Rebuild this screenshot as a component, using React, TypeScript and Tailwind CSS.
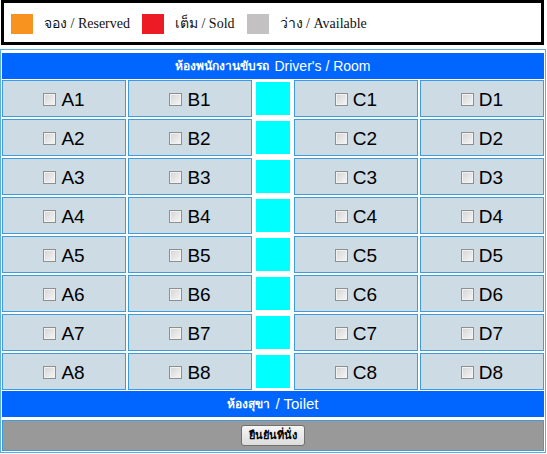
import React from "react";

const rows = [1, 2, 3, 4, 5, 6, 7, 8];

function Seat({ id }: { id: string }) {
  return (
    <label className="flex items-center justify-center gap-[5px] pt-[2px] border border-[#3d9cd9] bg-[#cddbe5] text-[19px] leading-none text-black">
      <input
        type="checkbox"
        className="appearance-none w-[13px] h-[13px] border border-[#8e8f8f] bg-gradient-to-br from-[#d4d4d4] to-[#f7f7f7] shadow-[inset_0_0_0_1px_#f2f2f2]"
      />
      <span>{id}</span>
    </label>
  );
}

function Swatch({ color, label }: { color: string; label: string }) {
  return (
    <div className="flex items-center gap-[11px]">
      <span className={`w-[22px] h-[20px] ${color}`} />
      <span className="text-[14px] text-[#111] font-['Liberation_Serif','Noto_Sans',serif]">
        {label}
      </span>
    </div>
  );
}

export default function App() {
  return (
    <div className="w-[547px] bg-white font-['Liberation_Sans','DejaVu_Sans','Noto_Sans',sans-serif]">
      {/* legend */}
      <div className="ml-[1px] w-[543px] h-[45px] border-[3px] border-black flex items-center gap-[12px] pl-[7px] pt-[2px]">
        <Swatch color="bg-[#f7931e]" label="จอง / Reserved" />
        <Swatch color="bg-[#ed1c24]" label="เต็ม / Sold" />
        <Swatch color="bg-[#c3c1c1]" label="ว่าง / Available" />
      </div>

      {/* seat table */}
      <div className="mt-[4px] w-[546px] border border-[#5aaee0] pt-[3px] px-[1px] pb-[1px] flex flex-col">
        <div className="h-[26px] bg-[#0066ff] flex items-center justify-center text-white text-[14px]">
          <span className="font-bold text-[12px] mr-[5px]">ห้องพนักงานขับรถ</span>
          <span>Driver's / Room</span>
        </div>

        <div className="mt-[1px] grid grid-cols-[1fr_1fr_38px_1fr_1fr] auto-rows-[37px] gap-[2px]">
          {rows.map((n) => (
            <React.Fragment key={n}>
              <Seat id={`A${n}`} />
              <Seat id={`B${n}`} />
              <div className="border-2 border-white bg-[#00ffff]" />
              <Seat id={`C${n}`} />
              <Seat id={`D${n}`} />
            </React.Fragment>
          ))}
        </div>

        <div className="mt-[1px] h-[26px] bg-[#0066ff] flex items-center justify-center text-white text-[15px]">
          <span className="font-bold text-[12px] mr-[5px]">ห้องสุขา</span>
          <span>/ Toilet</span>
        </div>

        <div className="mt-[3px] h-[31px] border border-[#3d9cd9] bg-[#999999] flex items-center justify-center">
          <button className="h-[21px] px-[7px] rounded-[3px] border border-[#707070] bg-gradient-to-b from-[#f6f6f6] to-[#dddddd] text-[11px] font-bold text-black">
            ยืนยันที่นั่ง
          </button>
        </div>
      </div>
    </div>
  );
}
